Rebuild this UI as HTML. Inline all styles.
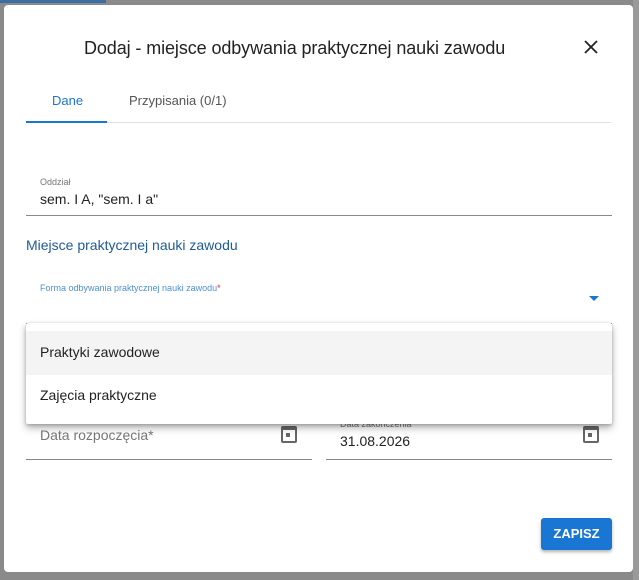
<!DOCTYPE html>
<html><head><meta charset="utf-8"><style>
*{box-sizing:border-box;margin:0;padding:0}
body{width:639px;height:580px;background:#8a8a8a;font-family:"Liberation Sans",sans-serif;position:relative;overflow:hidden}
.topbar{position:absolute;left:0;top:0;width:106px;height:3px;background:#3a6ea5}
.stripe{position:absolute;left:633px;top:0;width:6px;height:580px;background:#9a9a9a}
.dlg{position:absolute;left:4px;top:5px;width:629px;height:567px;background:#fff;border-radius:4px}
.abs{position:absolute}
.title{left:80px;top:33px;font-size:18px;color:#222;letter-spacing:-0.1px}
.tab1{left:48px;top:88px;font-size:13px;color:#1976d2}
.tab2{left:125px;top:88px;font-size:13px;color:#555}
.tabline{left:22px;top:117px;width:585px;height:1px;background:#e0e0e0}
.tabsel{left:22px;top:116px;width:81px;height:2px;background:#1976d2}
.lbl{font-size:9px;color:#777}
.val{font-size:14px;color:#222}
.line{height:1px;background:#888}
.menu{left:22px;top:318px;width:586px;height:101px;background:#fff;box-shadow:0 4px 8px rgba(0,0,0,.3),0 1px 3px rgba(0,0,0,.2);border-radius:2px}
.cal{width:16px;height:17px;border:2px solid #666;border-top-width:4px;border-radius:2px}
.cal:after{content:"";position:absolute;left:3px;top:3px;width:4px;height:4px;background:#666}
.btn{left:537px;top:513px;width:71px;height:32px;background:#1976d2;color:#fff;font-size:13px;font-weight:bold;text-align:center;line-height:32px;border-radius:3px;box-shadow:0 2px 3px rgba(0,0,0,.3)}
</style></head><body>
<div class="topbar"></div><div class="stripe"></div>
<div class="dlg">
<div class="abs title">Dodaj - miejsce odbywania praktycznej nauki zawodu</div>
<svg class="abs" style="left:580px;top:35px" width="14" height="14" viewBox="0 0 14 14"><path d="M1 1L13 13M13 1L1 13" stroke="#222" stroke-width="1.8"/></svg>
<div class="abs tab1">Dane</div>
<div class="abs tab2">Przypisania (0/1)</div>
<div class="abs tabline"></div><div class="abs tabsel"></div>
<div class="abs lbl" style="left:36px;top:172px">Oddział</div>
<div class="abs val" style="left:36px;top:186px">sem. I A, "sem. I a"</div>
<div class="abs line" style="left:22px;top:210px;width:586px"></div>
<div class="abs" style="left:22px;top:232px;font-size:14px;color:#1e5a9a">Miejsce praktycznej nauki zawodu</div>
<div class="abs lbl" style="left:36px;top:278px;color:#4a90d9">Forma odbywania praktycznej nauki zawodu<span style="color:#d32f2f">*</span></div>
<div class="abs" style="left:585px;top:291px;width:0;height:0;border-left:5px solid transparent;border-right:5px solid transparent;border-top:5px solid #1976d2"></div>
<div class="abs" style="left:22px;top:318px;width:586px;height:1px;background:#1976d2"></div>
<div class="abs lbl" style="left:336px;top:414px">Data zakończenia</div>
<div class="abs val" style="left:36px;top:422px;color:#777">Data rozpoczęcia*</div>
<div class="abs cal" style="left:277px;top:421px"></div>
<div class="abs line" style="left:22px;top:454px;width:286px"></div>
<div class="abs val" style="left:336px;top:428px">31.08.2026</div>
<div class="abs cal" style="left:579px;top:421px"></div>
<div class="abs line" style="left:322px;top:454px;width:286px"></div>
<div class="abs menu">
<div class="abs" style="left:0;top:8px;width:586px;height:44px;background:#f4f4f4"></div>
<div class="abs val" style="left:14px;top:21px">Praktyki zawodowe</div>
<div class="abs val" style="left:14px;top:64px">Zajęcia praktyczne</div>
</div>
<div class="abs btn">ZAPISZ</div>
</div>
</body></html>
